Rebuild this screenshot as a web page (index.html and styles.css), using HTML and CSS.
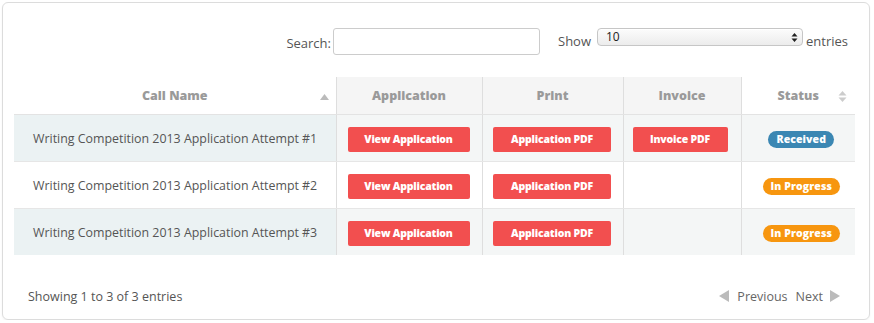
FILE: index.html
```html
<!DOCTYPE html>
<html>
<head>
<meta charset="utf-8">
<link rel="stylesheet" href="styles.css">
</head>
<body>
<div class="panel">
  <div class="toolbar">
    <label class="search">Search:<input class="search-input" type="text"></label>
    <div class="show">Show <div class="select"><span>10</span><span class="spin"><svg width="7" height="11" viewBox="0 0 7 11"><path d="M3.5 1 L6.5 4.5 L0.5 4.5 Z M3.5 10 L6.5 6.5 L0.5 6.5 Z" fill="#222"/></svg></span></div> entries</div>
  </div>
  <table class="grid">
    <colgroup>
      <col class="c1"><col class="c2"><col class="c3"><col class="c4"><col class="c5">
    </colgroup>
    <thead>
      <tr>
        <th class="sort">Call Name<svg class="sort-icon asc" width="9" height="6" viewBox="0 0 9 6"><path d="M4.5 0 L9 6 L0 6 Z" fill="#bbb"/></svg></th>
        <th class="fixed">Application</th>
        <th class="fixed">Print</th>
        <th class="fixed">Invoice</th>
        <th class="sort">Status<svg class="sort-icon both" width="9" height="11" viewBox="0 0 9 11"><path d="M4.5 0 L8.5 4.5 L0.5 4.5 Z" fill="#ccc"/><path d="M4.5 11 L8.5 6.5 L0.5 6.5 Z" fill="#ccc"/></svg></th>
      </tr>
    </thead>
    <tbody>
      <tr class="odd">
        <td class="name">Writing Competition 2013 Application Attempt #1</td>
        <td><span class="btn w-view">View Application</span></td>
        <td><span class="btn w-pdf">Application PDF</span></td>
        <td><span class="btn w-inv">Invoice PDF</span></td>
        <td><span class="badge blue">Received</span></td>
      </tr>
      <tr class="even">
        <td class="name">Writing Competition 2013 Application Attempt #2</td>
        <td><span class="btn w-view">View Application</span></td>
        <td><span class="btn w-pdf">Application PDF</span></td>
        <td></td>
        <td><span class="badge orange">In Progress</span></td>
      </tr>
      <tr class="odd">
        <td class="name">Writing Competition 2013 Application Attempt #3</td>
        <td><span class="btn w-view">View Application</span></td>
        <td><span class="btn w-pdf">Application PDF</span></td>
        <td></td>
        <td><span class="badge orange">In Progress</span></td>
      </tr>
    </tbody>
  </table>
  <div class="footer">
    <div class="info">Showing 1 to 3 of 3 entries</div>
    <div class="pager">
      <span class="pg"><svg width="10" height="12" viewBox="0 0 10 12"><path d="M0 6 L10 0 L10 12 Z" fill="#bbb"/></svg>Previous</span>
      <span class="pg">Next<svg width="10" height="12" viewBox="0 0 10 12"><path d="M10 6 L0 0 L0 12 Z" fill="#bbb"/></svg></span>
    </div>
  </div>
</div>
</body>
</html>
```
FILE: styles.css
```css
html, body {
  margin: 0;
  padding: 0;
  background: #ffffff;
}
body {
  font-family: "Open Sans", "DejaVu Sans", sans-serif;
  color: #555;
  font-size: 13px;
}
.panel {
  box-sizing: border-box;
  margin: 2px 0 0 2px;
  width: 868px;
  height: 318px;
  border: 1px solid #dcdcdc;
  border-radius: 6px;
  padding: 23px 13px 0 11px;
  box-shadow: 0 1px 2px rgba(0,0,0,0.05);
}
.toolbar {
  display: flex;
  justify-content: flex-end;
  align-items: flex-start;
  height: 27px;
  padding-right: 8px;
}
.search {
  display: flex;
  align-items: center;
  color: #555;
  font-size: 13px;
  height: 27px;
  margin-top: 3px;
}
.search-input {
  box-sizing: border-box;
  width: 207px;
  height: 27px;
  margin: -3px 0 0 2px;
  border: 1px solid #ccc;
  border-radius: 3px;
  background: #fff;
  padding: 0;
}
.show {
  display: flex;
  align-items: flex-start;
  margin-left: 18px;
  font-size: 13px;
  line-height: 18px;
  padding-top: 6px;
}
.select {
  box-sizing: border-box;
  display: flex;
  align-items: center;
  justify-content: space-between;
  width: 206px;
  height: 18px;
  margin: -4px 3px 0 6px;
  border: 1px solid #c6c6c6;
  border-radius: 4px;
  background: linear-gradient(#fcfcfc, #ececec);
  padding: 0 4px 0 8px;
  color: #222;
  font-size: 12px;
  box-shadow: inset 0 1px 0 #fff;
}
.spin {
  display: flex;
  align-items: center;
}
.grid {
  margin-top: 24px;
  border-collapse: collapse;
  table-layout: fixed;
  width: 841px;
}
.c1 { width: 322px; }
.c2 { width: 146px; }
.c3 { width: 141px; }
.c4 { width: 118px; }
.c5 { width: 114px; }
.grid th {
  height: 37px;
  padding: 0;
  font-weight: 800;
  font-size: 12.5px;
  color: #9a9a9a;
  text-align: center;
  border-bottom: 1px solid #e3e3e3;
  position: relative;
}
.grid th + th {
  border-left: 1px solid #dedede;
}
.grid th.fixed {
  background: #f5f5f5;
}
.grid th.sort {
  background: #fff;
}
.sort-icon {
  position: absolute;
  top: 50%;
}
.sort-icon.asc {
  right: 7px;
  margin-top: -2px;
}
.sort-icon.both {
  right: 8px;
  margin-top: -5px;
}
.grid td {
  height: 46px;
  padding: 0;
  text-align: center;
  border-bottom: 1px solid #e6e6e6;
  vertical-align: middle;
}
.grid td + td {
  border-left: 1px solid #dedede;
}
.grid tr:last-child td {
  border-bottom: none;
}
.grid tr.odd td {
  background: #f4f6f6;
}
.grid tr.odd td.name {
  background: #ebf2f3;
}
.grid td.name {
  text-align: left;
  padding-left: 19px;
  color: #555;
  font-size: 12.4px;
  white-space: nowrap;
}
.btn {
  display: inline-block;
  box-sizing: border-box;
  height: 25px;
  line-height: 25px;
  background: #f24f4f;
  color: #fff;
  font-weight: 800;
  font-size: 10.5px;
  border-radius: 2px;
  letter-spacing: -0.2px;
  margin-top: 3px;
}
.w-view { width: 122px; margin-left: -1px; }
.w-pdf { width: 118px; margin-left: -1px; }
.w-inv { width: 95px; margin-left: -4px; }
.badge {
  display: inline-block;
  height: 17px;
  line-height: 17px;
  padding: 0 8px;
  border-radius: 9px;
  color: #fff;
  font-weight: 800;
  font-size: 10.5px;
  letter-spacing: 0.1px;
}
.badge.blue {
  background: #3b87b3;
  margin-left: 6px;
}
.badge.orange {
  background: #f7960f;
  margin-left: 6px;
}
.footer {
  display: flex;
  justify-content: space-between;
  align-items: center;
  margin-top: 32px;
  padding: 0 16px 0 14px;
  height: 18px;
  font-size: 12.5px;
  color: #555;
}
.pager {
  display: flex;
  align-items: center;
  gap: 8px;
}
.pg {
  display: flex;
  align-items: center;
  gap: 8px;
  color: #666;
}
.pg:last-child {
  gap: 7px;
}
```
